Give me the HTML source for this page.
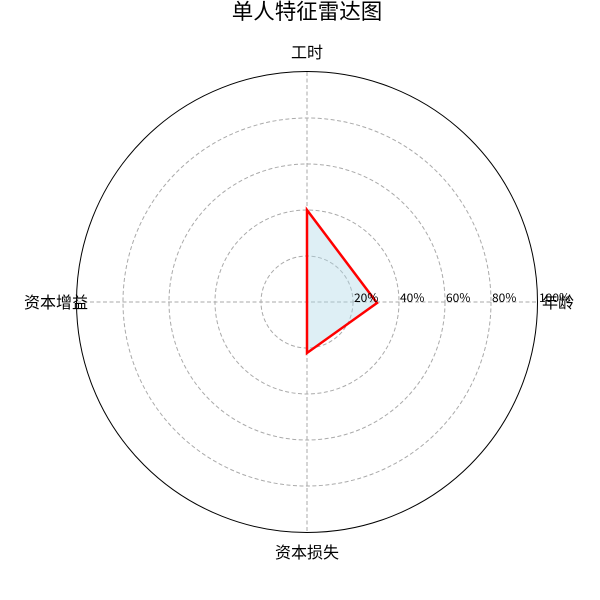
<!DOCTYPE html>
<html><head><meta charset="utf-8"><style>
html,body{margin:0;padding:0;background:#fff;width:600px;height:600px;overflow:hidden}
svg text{font-family:"WenQuanYi Zen Hei","Noto Sans CJK SC",sans-serif;fill:#000}
.t{font-family:"DejaVu Sans Condensed","DejaVu Sans","Liberation Sans",sans-serif}
</style></head><body>
<svg width="600" height="600" viewBox="0 0 600 600" xmlns="http://www.w3.org/2000/svg">
<g fill="none" stroke="#aaa" stroke-width="1" stroke-dasharray="4,2.5">
<circle cx="307" cy="302" r="46"/>
<circle cx="307" cy="302" r="92"/>
<circle cx="307" cy="302" r="138"/>
<circle cx="307" cy="302" r="184"/>
<line x1="77" y1="302" x2="537" y2="302"/>
<line x1="307" y1="72" x2="307" y2="532"/>
</g>
<circle cx="307" cy="302" r="230.5" fill="none" stroke="#000" stroke-width="1"/>
<polygon points="307,210 377,303 307,353 307,302" fill="#add8e6" fill-opacity="0.4" stroke="none"/>
<polygon points="307,210 377,303 307,353 307,302" fill="none" stroke="#ff0000" stroke-width="2.5" stroke-linejoin="miter"/>
<g class="t" font-size="12">
<text x="354" y="302">20%</text>
<text x="400" y="302">40%</text>
<text x="446" y="302">60%</text>
<text x="492" y="302">80%</text>
<text x="539" y="302">100%</text>
</g>
<text x="307" y="19" font-size="21.5" text-anchor="middle">单人特征雷达图</text>
<text x="307" y="58" font-size="16" text-anchor="middle">工时</text>
<text x="542" y="308" font-size="16">年龄</text>
<text x="24" y="308" font-size="16">资本增益</text>
<text x="307" y="558" font-size="16" text-anchor="middle">资本损失</text>
</svg>
</body></html>
